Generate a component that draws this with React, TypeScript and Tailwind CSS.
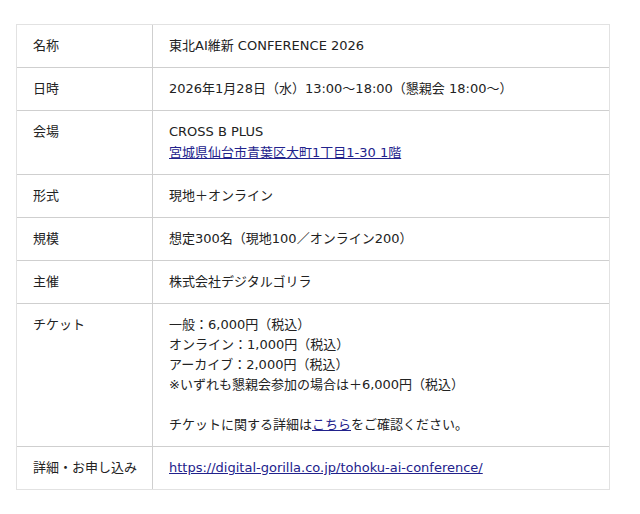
import React from "react";

const font = { fontFamily: '"DejaVu Sans", "Noto Sans CJK JP", sans-serif' };

function Row({ label, children, first }: { label: string; children: React.ReactNode; first?: boolean }) {
  return (
    <div className={`flex ${first ? "" : "border-t border-[#cfcfcf]"}`}>
      <div className="w-[136px] shrink-0 border-r border-[#cfcfcf] pl-4 py-[11px] leading-[20px]">{label}</div>
      <div className="flex-1 pl-4 py-[11px] leading-[20px]">{children}</div>
    </div>
  );
}

const linkCls = "text-[#22228c] underline";

export default function App() {
  return (
    <div className="w-[640px] h-[514px] bg-white pt-6 px-4 text-[13px] text-[#222]" style={font}>
      <div className="w-[594px] border border-[#e2e2e2]">
        <Row label="名称" first>東北AI維新 CONFERENCE 2026</Row>
        <Row label="日時">2026年1月28日（水）13:00〜18:00（懇親会 18:00〜）</Row>
        <Row label="会場">
          <div>CROSS B PLUS</div>
          <div className="leading-[21px]">
            <a className={linkCls} href="#">宮城県仙台市青葉区大町1丁目1-30 1階</a>
          </div>
        </Row>
        <Row label="形式">現地＋オンライン</Row>
        <Row label="規模">想定300名（現地100／オンライン200）</Row>
        <Row label="主催">株式会社デジタルゴリラ</Row>
        <Row label="チケット">
          <div>一般：6,000円（税込）</div>
          <div>オンライン：1,000円（税込）</div>
          <div>アーカイブ：2,000円（税込）</div>
          <div>※いずれも懇親会参加の場合は＋6,000円（税込）</div>
          <div className="h-5" />
          <div>
            チケットに関する詳細は<a className={linkCls} href="#">こちら</a>をご確認ください。
          </div>
        </Row>
        <Row label="詳細・お申し込み">
          <a className={linkCls} href="#">https://digital-gorilla.co.jp/tohoku-ai-conference/</a>
        </Row>
      </div>
    </div>
  );
}
